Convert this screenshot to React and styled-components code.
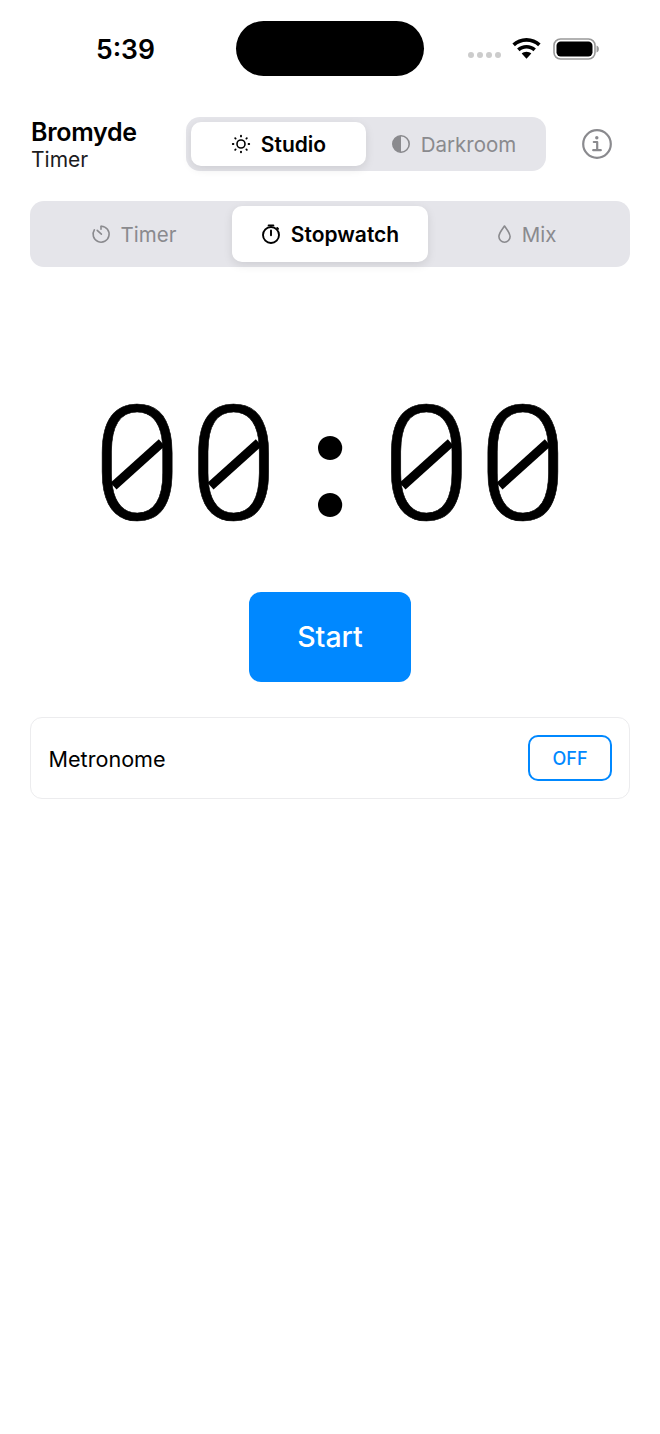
import * as React from 'react'
import styled, {createGlobalStyle} from 'styled-components'

const GlobalStyle = createGlobalStyle`
  html, body {
    margin: 0;
    padding: 0;
    background: #fff;
    font-family: Inter, 'Liberation Sans', sans-serif;
    color: #000;
  }
`

function StudioIcon() {
  return (
    <svg width="20" height="20" viewBox="0 0 20 20" fill="none" stroke="currentColor" strokeWidth="1.6" strokeLinecap="round">
      <circle cx="10" cy="10" r="4" />
      <path d="M10 1.8v.6M10 17.6v.6M1.8 10h.6M17.6 10h.6M4.2 4.2l.4.4M15.4 15.4l.4.4M4.2 15.8l.4-.4M15.4 4.6l.4-.4" strokeWidth="1.9" />
    </svg>
  )
}

function DarkroomIcon() {
  return (
    <svg width="20" height="20" viewBox="0 0 20 20" fill="none" stroke="currentColor" strokeWidth="1.6">
      <circle cx="10" cy="10" r="8.2" />
      <path d="M10 1.8a8.2 8.2 0 0 0 0 16.4z" fill="currentColor" stroke="none" />
    </svg>
  )
}

function TimerIcon() {
  return (
    <svg width="20" height="20" viewBox="0 0 20 20" fill="none" stroke="currentColor" strokeWidth="1.6" strokeLinecap="round" strokeLinejoin="round">
      <path d="M10.4 2.200a8 8 0 1 1-7 3.600" />
      <path d="M10 2.200v3M6.200 6.400l4.200 3.800" />
    </svg>
  )
}

function StopwatchIcon() {
  return (
    <svg width="20" height="20" viewBox="0 0 20 20" fill="none" stroke="currentColor" strokeWidth="1.9" strokeLinecap="round">
      <circle cx="10" cy="11" r="8" />
      <path d="M7.600 1.400h4.800M10 6.400v4.800M16.200 3.900l.9.9" />
    </svg>
  )
}

function DropIcon() {
  return (
    <svg width="15" height="20" viewBox="2.500 0 15 20" fill="none" stroke="currentColor" strokeWidth="1.6" strokeLinejoin="round">
      <path d="M10 2c-2.400 3.600-5.600 6.800-5.600 10.600a5.600 5.600 0 0 0 11.200 0C15.600 8.800 12.400 5.600 10 2z" />
    </svg>
  )
}

function InfoIcon() {
  return (
    <svg width="30" height="30" viewBox="0 0 30 30" fill="none" stroke="currentColor" strokeWidth="2.2" strokeLinecap="round" strokeLinejoin="round">
      <circle cx="15" cy="15" r="13.800" />
      <circle cx="14.800" cy="8.800" r="1.700" fill="currentColor" stroke="none" />
      <path d="M11.800 13h3.400v8M11.200 21.200h7.600" />
    </svg>
  )
}

function WifiIcon() {
  return (
    <svg width="29" height="21" viewBox="0 0 29 21" fill="currentColor">
      <path d="M14.500 0C9 0 4.100 2.100.4 5.500l2.500 2.700C5.900 5.400 10 3.700 14.500 3.700s8.600 1.700 11.600 4.500l2.500-2.700C24.900 2.100 20 0 14.500 0z" />
      <path d="M14.500 6.900c-3.600 0-6.900 1.400-9.400 3.600l2.500 2.700c1.800-1.600 4.300-2.600 6.900-2.600s5.100 1 6.900 2.600l2.500-2.700c-2.500-2.200-5.800-3.600-9.400-3.600z" />
      <path d="M14.500 13.700c-1.900 0-3.500.7-4.800 1.800l4.800 5.300 4.800-5.300c-1.300-1.100-2.900-1.800-4.800-1.800z" />
    </svg>
  )
}

function BatteryIcon() {
  return (
    <svg width="46" height="22" viewBox="0 0 46 22">
      <rect x="1" y="1" width="41" height="20" rx="6.500" fill="none" stroke="#999" strokeWidth="1.600" />
      <rect x="3.500" y="3.500" width="36" height="15" rx="4.200" fill="#000" />
      <path d="M43.500 7.500v7c1.500-.4 2.400-1.900 2.400-3.500s-.9-3.100-2.400-3.500z" fill="#999" />
    </svg>
  )
}

export default function App() {
  return (
    <Screen>
      <GlobalStyle />
      <StatusBar>
        <Clock>5:39</Clock>
        <Island />
        <StatusIcons>
          <SignalDots>
            <SignalDot />
            <SignalDot />
            <SignalDot />
            <SignalDot />
          </SignalDots>
          <WifiIcon />
          <BatteryIcon />
        </StatusIcons>
      </StatusBar>

      <Header>
        <Titles>
          <AppName>Bromyde</AppName>
          <AppSub>Timer</AppSub>
        </Titles>
        <ThemeSwitch>
          <ThemeOption $active>
            <StudioIcon />
            Studio
          </ThemeOption>
          <ThemeOption>
            <DarkroomIcon />
            Darkroom
          </ThemeOption>
        </ThemeSwitch>
        <InfoButton>
          <InfoIcon />
        </InfoButton>
      </Header>

      <Tabs>
        <Tab>
          <TimerIcon />
          Timer
        </Tab>
        <Tab $active>
          <StopwatchIcon />
          Stopwatch
        </Tab>
        <Tab>
          <DropIcon />
          Mix
        </Tab>
      </Tabs>

      <TimeDisplay>
        <Digit>0</Digit>
        <Digit>0</Digit>
        <Colon>:</Colon>
        <Digit>0</Digit>
        <Digit>0</Digit>
      </TimeDisplay>

      <StartRow>
        <StartButton>Start</StartButton>
      </StartRow>

      <MetronomeCard>
        <MetronomeLabel>Metronome</MetronomeLabel>
        <ToggleButton>OFF</ToggleButton>
      </MetronomeCard>
    </Screen>
  )
}

const Screen = styled.div`
  width: 660px;
  height: 1434px;
  overflow: hidden;
  background: #fff;
  display: flex;
  flex-direction: column;
`

const StatusBar = styled.div`
  display: grid;
  grid-template-columns: 236px 188px 236px;
  align-items: center;
  height: 55px;
  margin-top: 21px;
`

const Clock = styled.div`
  font-size: 26.5px;
  font-weight: 600;
  padding-left: 96px;
`

const Island = styled.div`
  height: 55px;
  background: #000;
  border-radius: 28px;
`

const StatusIcons = styled.div`
  display: flex;
  align-items: center;
  padding-left: 44px;

  svg + svg {
    margin-left: 12px;
  }
`

const SignalDots = styled.div`
  display: flex;
  gap: 3px;
  margin: 13px 11px 0 0;
`

const SignalDot = styled.span`
  width: 6px;
  height: 6px;
  border-radius: 50%;
  background: #ccc;
`

const Header = styled.div`
  height: 54px;
  display: flex;
  align-items: center;
  margin-top: 41px;
  padding: 0 30px 0 31px;
`

const Titles = styled.div`
  width: 155px;
  display: flex;
  flex-direction: column;
  padding-top: 4px;
`

const AppName = styled.div`
  font-size: 25px;
  font-weight: 600;
  line-height: 28px;
  letter-spacing: -0.3px;
`

const AppSub = styled.div`
  font-size: 21px;
  line-height: 28px;
  color: #1c1c1e;
`

const ThemeSwitch = styled.div`
  width: 360px;
  height: 54px;
  box-sizing: border-box;
  padding: 5px;
  display: flex;
  background: #e5e5ea;
  border-radius: 14px;
`

const ThemeOption = styled.div`
  flex: 1;
  display: flex;
  align-items: center;
  justify-content: center;
  gap: 10px;
  font-size: ${p => (p.$active ? '21px' : '20.5px')};
  font-weight: ${p => (p.$active ? 600 : 400)};
  color: ${p => (p.$active ? '#000' : '#8a8a8e')};
  background: ${p => (p.$active ? '#fff' : 'transparent')};
  border-radius: 10px;
  box-shadow: ${p => (p.$active ? '0 3px 10px rgba(0, 0, 0, 0.1)' : 'none')};
`

const InfoButton = styled.div`
  margin-left: 36px;
  display: flex;
  color: #8a8a8e;
`

const Tabs = styled.div`
  margin: 30px 30px 0;
  height: 66px;
  box-sizing: border-box;
  padding: 5px;
  display: grid;
  grid-template-columns: 1fr 196px 1fr;
  background: #e5e5ea;
  border-radius: 14px;
`

const Tab = styled(ThemeOption)``

const TimeDisplay = styled.div`
  margin: 101px auto 0;
  height: 190px;
  display: grid;
  grid-template-columns: repeat(5, 96.4px);
  grid-template-rows: 190px;
  align-items: center;
  justify-items: center;
  line-height: 190px;
`

const Digit = styled.span`
  position: relative;
  display: block;
  width: 100%;
  padding-top: 4px;
  text-align: center;
  font-family: Roboto, sans-serif;
  font-weight: 300;
  font-size: 160px;
  -webkit-text-stroke: 0.6px #000;

  &::after {
    content: '';
    position: absolute;
    left: 50%;
    top: 50%;
    width: 65px;
    height: 8.5px;
    margin: -3.5px 0 0 -32px;
    background: #000;
    transform: rotate(-42deg);
  }
`

const Colon = styled.span`
  margin-bottom: 18px;
  font-family: Lato, sans-serif;
  font-weight: 700;
  font-size: 160px;
`

const StartRow = styled.div`
  display: flex;
  justify-content: center;
  margin-top: 34px;
`

const StartButton = styled.div`
  width: 162px;
  height: 89.500px;
  display: flex;
  align-items: center;
  justify-content: center;
  background: #0088ff;
  color: #fff;
  font-size: 28.500px;
  font-weight: 500;
  border-radius: 12px;
`

const MetronomeCard = styled.div`
  margin: 35.500px 30px 0;
  height: 82px;
  box-sizing: border-box;
  padding: 0 17px 0 17.500px;
  display: flex;
  align-items: center;
  justify-content: space-between;
  border: 1px solid #ececee;
  border-radius: 12px;
`

const MetronomeLabel = styled.div`
  font-size: 21.600px;
  padding-top: 1px;
`

const ToggleButton = styled.div`
  width: 84px;
  height: 46px;
  box-sizing: border-box;
  display: flex;
  align-items: center;
  justify-content: center;
  border: 2px solid #0088ff;
  border-radius: 10px;
  color: #0088ff;
  font-size: 18px;
  font-weight: 500;
`
